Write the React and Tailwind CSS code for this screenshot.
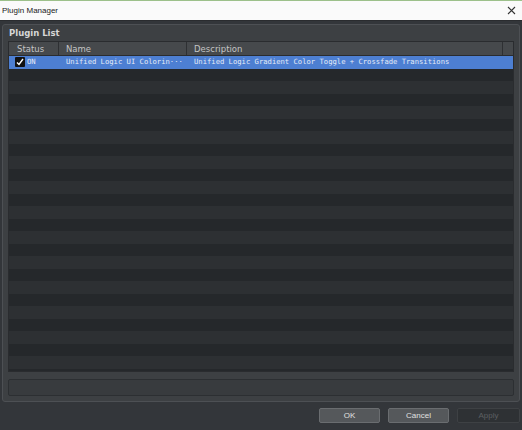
import { useMemo } from "react";

const plugins = [
  {
    on: true,
    name: "Unified Logic UI Colorin···",
    description: "Unified Logic Gradient Color Toggle + Crossfade Transitions",
  },
];

export default function App() {
  const rows = useMemo(() => Array.from({ length: 26 }, (_, i) => plugins[i] ?? null), []);

  return (
    <div className="w-[522px] h-[430px] overflow-hidden flex flex-col bg-[#33363a] font-['DejaVu_Sans',sans-serif]">
      {/* Title bar */}
      <div className="h-[21px] shrink-0 bg-[#fafafa] border-t border-[#9cc08a] border-b border-b-[#2a2c2f] flex items-center justify-between pl-[2px] pr-[6px]">
        <span className="text-[8px] text-[#222] font-['Liberation_Sans',sans-serif]">Plugin Manager</span>
        <svg width="9" height="9" viewBox="0 0 9 9" className="text-[#333]">
          <path d="M1 1 L8 8 M8 1 L1 8" stroke="currentColor" strokeWidth="1.1" />
        </svg>
      </div>

      {/* Group box */}
      <div className="mx-[2px] mt-[3px] h-[378px] shrink-0 rounded-[3px] border border-[#4d5054] bg-[#3d4043] px-[5px] flex flex-col">
        <div className="h-[16px] flex items-end pb-[1px] text-[8.5px] font-bold text-[#d6d6d6] pl-[1px]">Plugin List</div>

        {/* Table */}
        <div className="h-[331px] overflow-hidden border border-[#2a2c2f] bg-[#25282b] flex flex-col">
          <div className="h-[14px] shrink-0 flex bg-[#46494c] text-[8.5px] text-[#c4c4c4] border-b border-[#2a2c2f]">
            <div className="w-[50px] border-r border-[#2e3033] pl-[8px] leading-[14px]">Status</div>
            <div className="w-[128px] border-r border-[#2e3033] pl-[7px] leading-[14px]">Name</div>
            <div className="w-[316px] border-r border-[#2e3033] pl-[7px] leading-[14px]">Description</div>
            <div className="flex-1" />
          </div>
          {rows.map((p, i) => (
            <div
              key={i}
              className={
                "h-[12.5px] shrink-0 flex items-center font-['DejaVu_Sans_Mono',monospace] text-[7.2px] " +
                (p ? "bg-[#4d7fd2] text-[#e4ebf8]" : i % 2 === 0 ? "bg-[#2d3033]" : "bg-[#25282b]")
              }
            >
              {p && (
                <>
                  <div className="w-[50px] flex items-center pl-[6px] gap-[2px]">
                    <span className="w-[10px] h-[10px] bg-[#111] rounded-[1px] flex items-center justify-center">
                      <svg width="8" height="8" viewBox="0 0 8 8">
                        <path d="M1 4.5 L3 6.5 L7 1" stroke="#fff" strokeWidth="1.4" fill="none" />
                      </svg>
                    </span>
                    <span>ON</span>
                  </div>
                  <div className="w-[128px] pl-[7px] whitespace-nowrap overflow-hidden">{p.name}</div>
                  <div className="w-[316px] pl-[7px] whitespace-nowrap overflow-hidden">{p.description}</div>
                </>
              )}
            </div>
          ))}
        </div>

        {/* Status strip */}
        <div className="mt-[7px] h-[17px] rounded-[2px] border border-[#2c2f32] bg-[#383b3e]" />
      </div>

      {/* Buttons */}
      <div className="flex justify-end gap-[8px] pr-[2px] mt-[6px]">
        <button className="w-[61px] h-[15px] rounded-[2px] border border-[#6a6d70] bg-[#55585b] text-[8px] text-[#e0e0e0] font-['Liberation_Sans',sans-serif]">
          OK
        </button>
        <button className="w-[61px] h-[15px] rounded-[2px] border border-[#6a6d70] bg-[#55585b] text-[8px] text-[#e0e0e0] font-['Liberation_Sans',sans-serif]">
          Cancel
        </button>
        <button className="w-[63px] h-[15px] rounded-[2px] border border-[#3e4144] bg-[#2e3134] text-[8px] text-[#5c5f62] font-['Liberation_Sans',sans-serif]">
          Apply
        </button>
      </div>
    </div>
  );
}
